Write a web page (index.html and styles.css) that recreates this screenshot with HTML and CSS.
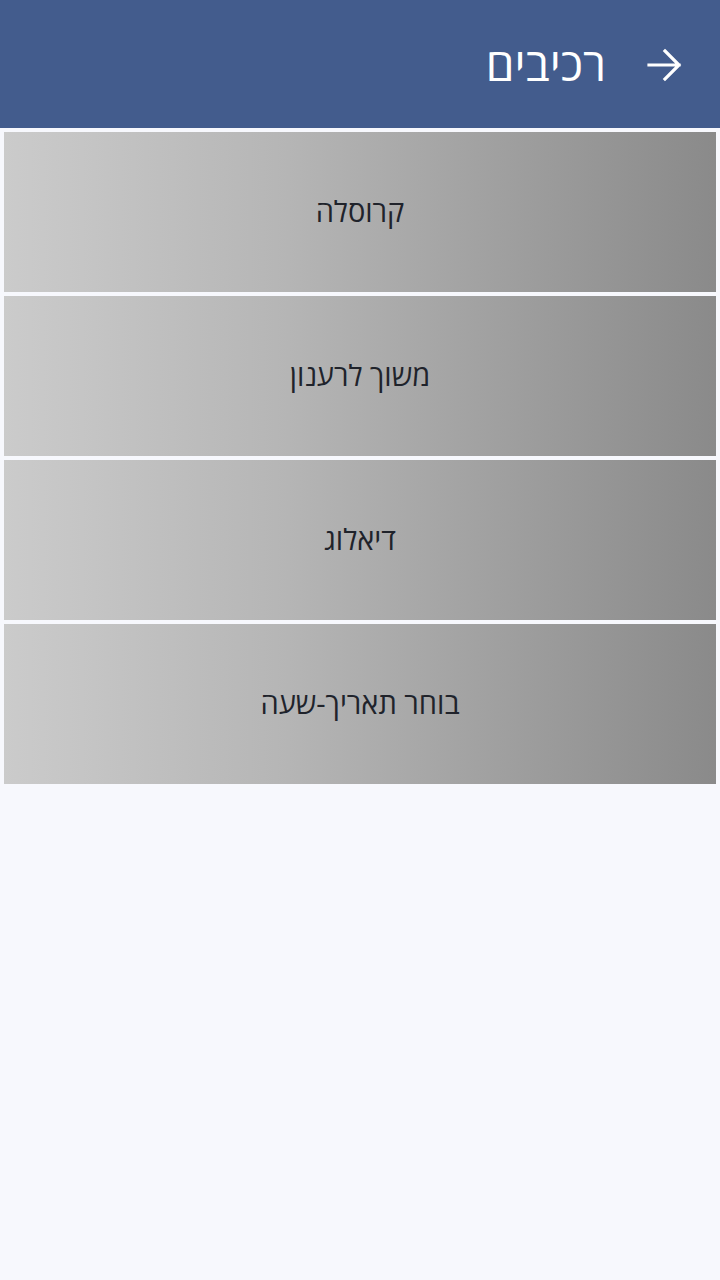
FILE: index.html
```html
<!DOCTYPE html>
<html lang="he" dir="rtl">
<head>
<meta charset="utf-8">
<link rel="stylesheet" href="styles.css">
</head>
<body>
<header class="appbar">
  <svg class="back" viewBox="0 0 36 36" width="36" height="36" aria-hidden="true">
    <path d="M3 18 H33 M19 4 L33 18 L19 32" fill="none" stroke="#fff" stroke-width="3.2" stroke-linecap="square"/>
  </svg>
  <h1 class="title">רכיבים</h1>
</header>
<main class="list">
  <div class="item">קרוסלה</div>
  <div class="item">משוך לרענון</div>
  <div class="item">דיאלוג</div>
  <div class="item">בוחר תאריך-שעה</div>
</main>
</body>
</html>
```
FILE: styles.css
```css
html, body {
  margin: 0;
  padding: 0;
  background: #f7f8fd;
  font-family: "Open Sans", "DejaVu Sans", "Liberation Sans", sans-serif;
}
.appbar {
  height: 128px;
  background: #435c8d;
  display: flex;
  align-items: center;
  padding-right: 38px;
  gap: 40px;
  box-sizing: border-box;
}
.back {
  display: block;
  margin-top: 2px;
}
.title {
  margin: 0;
  color: #fff;
  font-weight: 400;
  font-size: 46px;
  line-height: 1;
  margin-top: -2px;
}
.list {
  display: flex;
  flex-direction: column;
  gap: 4px;
  padding: 4px 4px 0 4px;
}
.item {
  height: 160px;
  display: flex;
  align-items: center;
  justify-content: center;
  background: linear-gradient(to right, #cbcbcb 0%, #b5b5b5 40%, #8a8a8a 100%);
  color: #20232b;
  font-size: 29px;
  padding-bottom: 4px;
  box-sizing: border-box;
}
```
